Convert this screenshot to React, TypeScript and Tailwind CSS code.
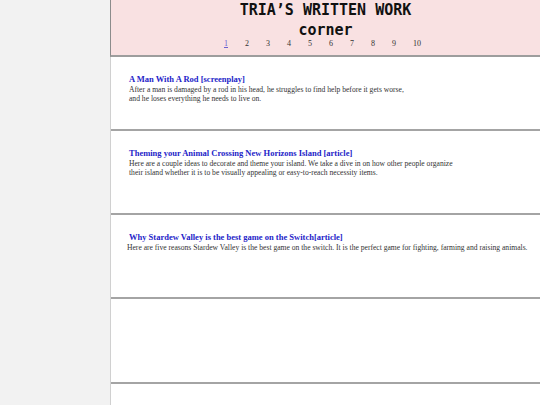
const articles = [
  {
    title: 'A Man With A Rod [screenplay]',
    lines: [
      'After a man is damaged by a rod in his head, he struggles to find help before it gets worse,',
      'and he loses everything he needs to live on.',
    ],
  },
  {
    title: 'Theming your Animal Crossing New Horizons Island [article]',
    lines: [
      'Here are a couple ideas to decorate and theme your island. We take a dive in on how other people organize',
      'their island whether it is to be visually appealing or easy-to-reach necessity items.',
    ],
  },
  {
    title: 'Why Stardew Valley is the best game on the Switch[article]',
    lines: [
      'Here are five reasons Stardew Valley is the best game on the switch. It is the perfect game for fighting, farming and raising animals.',
    ],
  },
];

const pages = [1, 2, 3, 4, 5, 6, 7, 8, 9, 10];

export default function App() {
  return (
    <div className="flex min-h-screen w-full bg-white" style={{ fontFamily: '"Liberation Serif", serif' }}>
      {/* Sidebar */}
      <div className="w-[110px] shrink-0 bg-[#f2f2f2]" />

      <div className="flex-1 flex flex-col">
        {/* Header */}
        <div className="h-[57px] bg-[#f9e1e2] border-l border-[#8c8c8c] border-b-2 border-b-[#9d9d9d] flex flex-col items-center">
          <h1
            className="text-[15px] font-bold leading-[18px] mt-[1px] text-[#111]"
            style={{ fontFamily: '"DejaVu Sans Mono", monospace' }}
          >
            TRIA&rsquo;S WRITTEN WORK
          </h1>
          <h2
            className="text-[15px] font-bold leading-[18px] mt-[2px] text-[#111]"
            style={{ fontFamily: '"DejaVu Sans Mono", monospace' }}
          >
            corner
          </h2>
          <div className="flex gap-[17px] text-[8px] leading-[10px] text-[#333] ml-[-6px]">
            {pages.map((p) => (
              <a
                key={p}
                href="#"
                className={p === 1 ? 'underline text-[#6b5fd0]' : ''}
              >
                {p}
              </a>
            ))}
          </div>
        </div>

        {/* Articles */}
        <div className="flex-1 border-l border-[#d0d0d0] flex flex-col">
          {articles.map((a, i) => (
            <div
              key={a.title}
              className={`${i === 0 ? 'h-[74px]' : 'h-[84px]'} border-b-2 border-b-[#a4a4a4] pt-[17px] ${i === 2 ? 'pl-[16px]' : 'pl-[18px]'}`}
            >
              <div className={`text-[8.5px] font-bold leading-[11px] text-[#2424c8] ${i === 2 ? 'pl-[2px]' : ''}`}>
                {a.title}
              </div>
              <div className="text-[7.6px] leading-[9px] text-[#333] whitespace-nowrap">
                {a.lines.map((l) => (
                  <div key={l}>{l}</div>
                ))}
              </div>
            </div>
          ))}
          <div className="h-[85px] border-b-2 border-b-[#a4a4a4]" />
          <div className="flex-1" />
        </div>
      </div>
    </div>
  );
}
